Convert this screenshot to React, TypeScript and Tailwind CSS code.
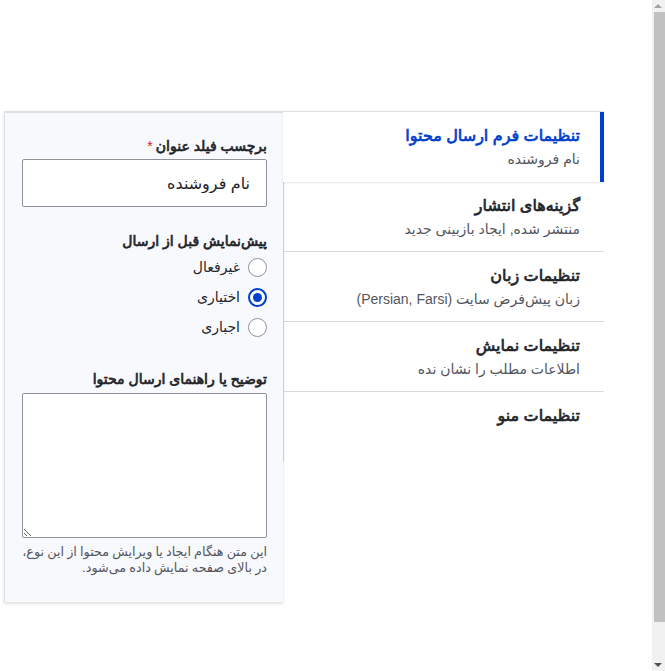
import React from 'react';

const tabs = [
  { title: 'تنظیمات فرم ارسال محتوا', summary: 'نام فروشنده' },
  { title: 'گزینه‌های انتشار', summary: 'منتشر شده, ایجاد بازبینی جدید' },
  { title: 'تنظیمات زبان', summary: 'زبان پیش‌فرض سایت (Persian, Farsi)' },
  { title: 'تنظیمات نمایش', summary: 'اطلاعات مطلب را نشان نده' },
  { title: 'تنظیمات منو', summary: '' },
];

const options = ['غیرفعال', 'اختیاری', 'اجباری'];

// synthetic-looking bold: regular glyph widths, thickened strokes
const heavy = 'font-normal [-webkit-text-stroke:0.7px_currentColor]';

const Radio: React.FC<{ checked?: boolean; label: string }> = ({ checked, label }) => (
  <label className="flex items-center gap-[8px] h-[30px]">
    {checked ? (
      <span className="w-[19px] h-[19px] rounded-full border-[2px] border-[#003ecc] bg-white flex items-center justify-center">
        <span className="w-[9px] h-[9px] rounded-full bg-[#003ecc]" />
      </span>
    ) : (
      <span className="w-[19px] h-[19px] rounded-full border border-[#8e929c] bg-white" />
    )}
    <span className="text-[14px] text-[#232429]">{label}</span>
  </label>
);

const Scrollbar = () => (
  <div className="fixed right-0 top-0 h-full w-[13px] bg-[#f1f1f1]">
    <div className="absolute top-[4px] right-[3px] w-0 h-0 border-l-[4px] border-r-[4px] border-b-[4px] border-l-transparent border-r-transparent border-b-[#a3a3a3]" />
    <div className="absolute top-[12px] right-0 w-[11px] h-[610px] bg-[#c1c1c1]" />
    <div className="absolute bottom-[4px] right-[3px] w-0 h-0 border-l-[4px] border-r-[4px] border-t-[4px] border-l-transparent border-r-transparent border-t-[#505050]" />
  </div>
);

export default function App() {
  const [active] = React.useState(0);

  return (
    <div
      dir="rtl"
      className="min-h-[671px] bg-white pt-[111px] pr-[61px] pl-[4px]"
      style={{ fontFamily: '"Liberation Sans", "DejaVu Sans", sans-serif' }}
    >
      <div className="flex items-start">
        {/* Tabs menu */}
        <ul className="w-[321px] shrink-0">
          {tabs.map((t, i) =>
            i === active ? (
              <li
                key={i}
                className="relative h-[71px] bg-white border-t border-[#dedfe4] shadow-[0_1px_2px_rgba(0,0,0,0.1)] pr-[24px] pt-[12px]"
              >
                <span className="absolute right-0 top-0 bottom-0 w-[4px] bg-[#003ecc]" />
                <div className={`text-[16px] ${heavy} text-[#003ecc] leading-[24px]`}>{t.title}</div>
                <div className="text-[14px] text-[#545560] leading-[22px]">{t.summary}</div>
              </li>
            ) : (
              <li
                key={i}
                className={`h-[70px] border-l border-[#d8d9de] pr-[24px] pt-[12px] ${
                  i < tabs.length - 1 ? 'border-b' : ''
                }`}
              >
                <div className={`text-[16px] ${heavy} text-[#232429] leading-[24px]`}>{t.title}</div>
                <div className="text-[14px] text-[#545560] leading-[22px]">{t.summary}</div>
              </li>
            )
          )}
        </ul>

        {/* Pane */}
        <div className="w-[279px] shrink-0 h-[491px] bg-[#f8f9fc] border-t-[2px] border-l border-[#dedfe4] shadow-[0_2px_3px_rgba(0,0,0,0.12)] pr-[16px] pl-[17px] pt-[24px]">
          <div className={`text-[14px] ${heavy} text-[#232429] leading-[18px] mb-[4px]`}>
            برچسب فیلد عنوان<span className="text-[#d72222] mr-[3px] [-webkit-text-stroke:0px]">*</span>
          </div>
          <input
            defaultValue="نام فروشنده"
            className="w-full h-[48px] border border-[#8e929c] rounded-[2px] bg-white px-[16px] text-[16px] text-[#232429] outline-none"
          />

          <div className={`text-[14px] ${heavy} text-[#232429] leading-[18px] mt-[25px] mb-[2px]`}>
            پیش‌نمایش قبل از ارسال
          </div>
          <div className="flex flex-col">
            {options.map((o, i) => (
              <Radio key={o} label={o} checked={i === 1} />
            ))}
          </div>

          <div className={`text-[14px] ${heavy} text-[#232429] leading-[18px] mt-[28px] mb-[5px]`}>
            توضیح یا راهنمای ارسال محتوا
          </div>
          <textarea
            dir="rtl"
            className="block w-full h-[145px] border border-[#8e929c] rounded-[2px] bg-white outline-none"
          />
          <p className="[font-family:Roboto,'DejaVu_Sans',sans-serif] text-[12.75px] text-[#545560] leading-[16px] mt-[6px]">
            این متن هنگام ایجاد یا ویرایش محتوا از این نوع، در بالای صفحه نمایش داده می‌شود.
          </p>
        </div>
      </div>
      <Scrollbar />
    </div>
  );
}
